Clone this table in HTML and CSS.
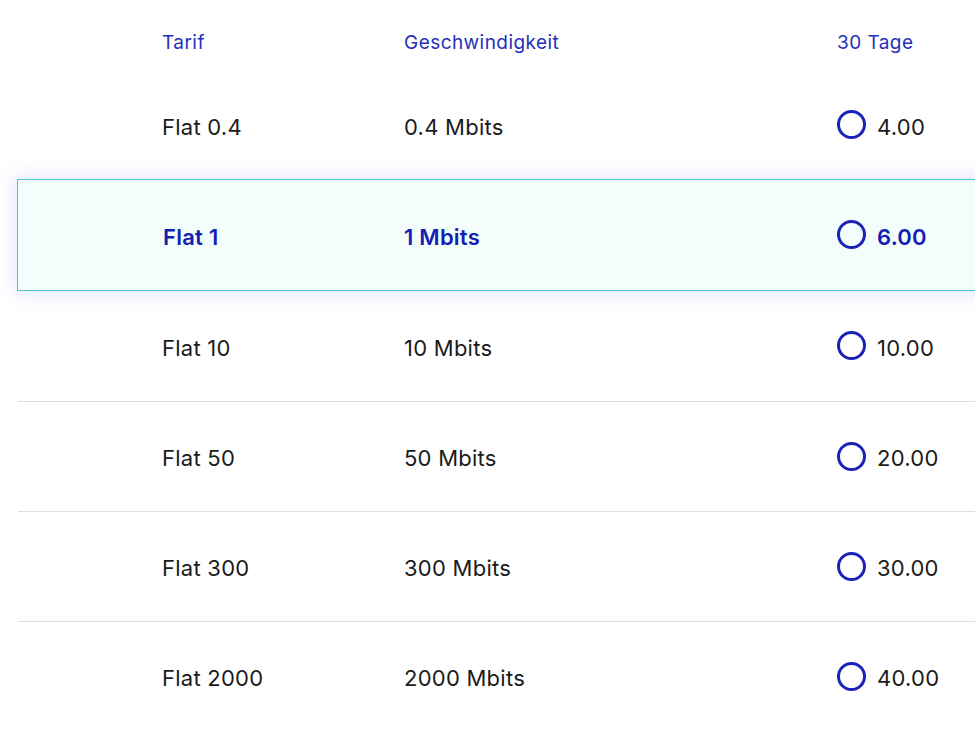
FILE: index.html
```html
<!DOCTYPE html>
<html lang="de">
<head>
<meta charset="utf-8">
<title>Tarife</title>
<link rel="stylesheet" href="styles.css">
</head>
<body>
<div class="table">
  <div class="row head">
    <div class="c1">Tarif</div>
    <div class="c2">Geschwindigkeit</div>
    <div class="c3">30 Tage</div>
  </div>
  <div class="row first">
    <div class="c1">Flat 0.4</div>
    <div class="c2">0.4 Mbits</div>
    <div class="c3"><span class="radio"></span>4.00</div>
  </div>
  <div class="row active">
    <div class="c1">Flat 1</div>
    <div class="c2">1 Mbits</div>
    <div class="c3"><span class="radio"></span>6.00</div>
  </div>
  <div class="row after">
    <div class="c1">Flat 10</div>
    <div class="c2">10 Mbits</div>
    <div class="c3"><span class="radio"></span>10.00</div>
  </div>
  <div class="row line">
    <div class="c1">Flat 50</div>
    <div class="c2">50 Mbits</div>
    <div class="c3"><span class="radio"></span>20.00</div>
  </div>
  <div class="row line">
    <div class="c1">Flat 300</div>
    <div class="c2">300 Mbits</div>
    <div class="c3"><span class="radio"></span>30.00</div>
  </div>
  <div class="row line">
    <div class="c1">Flat 2000</div>
    <div class="c2">2000 Mbits</div>
    <div class="c3"><span class="radio"></span>40.00</div>
  </div>
</div>
</body>
</html>
```
FILE: styles.css
```css
html, body {
  margin: 0;
  padding: 0;
  background: #ffffff;
  overflow: hidden;
}
body {
  font-family: "Inter", "Noto Sans", sans-serif;
  color: #1b1b1b;
}
.table {
  margin-left: 18px;
  width: 1100px;
}
.row {
  display: grid;
  grid-template-columns: 242px 433px 1fr;
  align-items: center;
  padding-left: 144px;
  height: 110px;
  box-sizing: border-box;
  font-size: 22px;
  line-height: 26px;
  letter-spacing: 0.25px;
}
.row > div {
  padding-top: 3px;
}
.head {
  height: 71px;
  align-items: start;
  padding-top: 30px;
  font-size: 19px;
  letter-spacing: 0.45px;
  color: #2630b8;
}
.head > div { padding-top: 0; }
.first { height: 108px; }
.active {
  height: 112px;
  margin-left: -1px;
  background: #f3fdfb;
  border: 1px solid #4cc3cf;
  border-right: none;
  box-shadow: 0 0 18px 2px rgba(70, 90, 240, 0.16);
  color: #1320b2;
  font-weight: 600;
  position: relative;
}
.active .c1 { padding-left: 1px; }
.line { border-top: 1px solid #dcdce2; }
.c3 {
  display: flex;
  align-items: center;
  gap: 11px;
}
.radio {
  width: 23px;
  height: 23px;
  border: 3px solid #1a23b6;
  border-radius: 50%;
  flex: none;
  margin-top: -4px;
}
```
